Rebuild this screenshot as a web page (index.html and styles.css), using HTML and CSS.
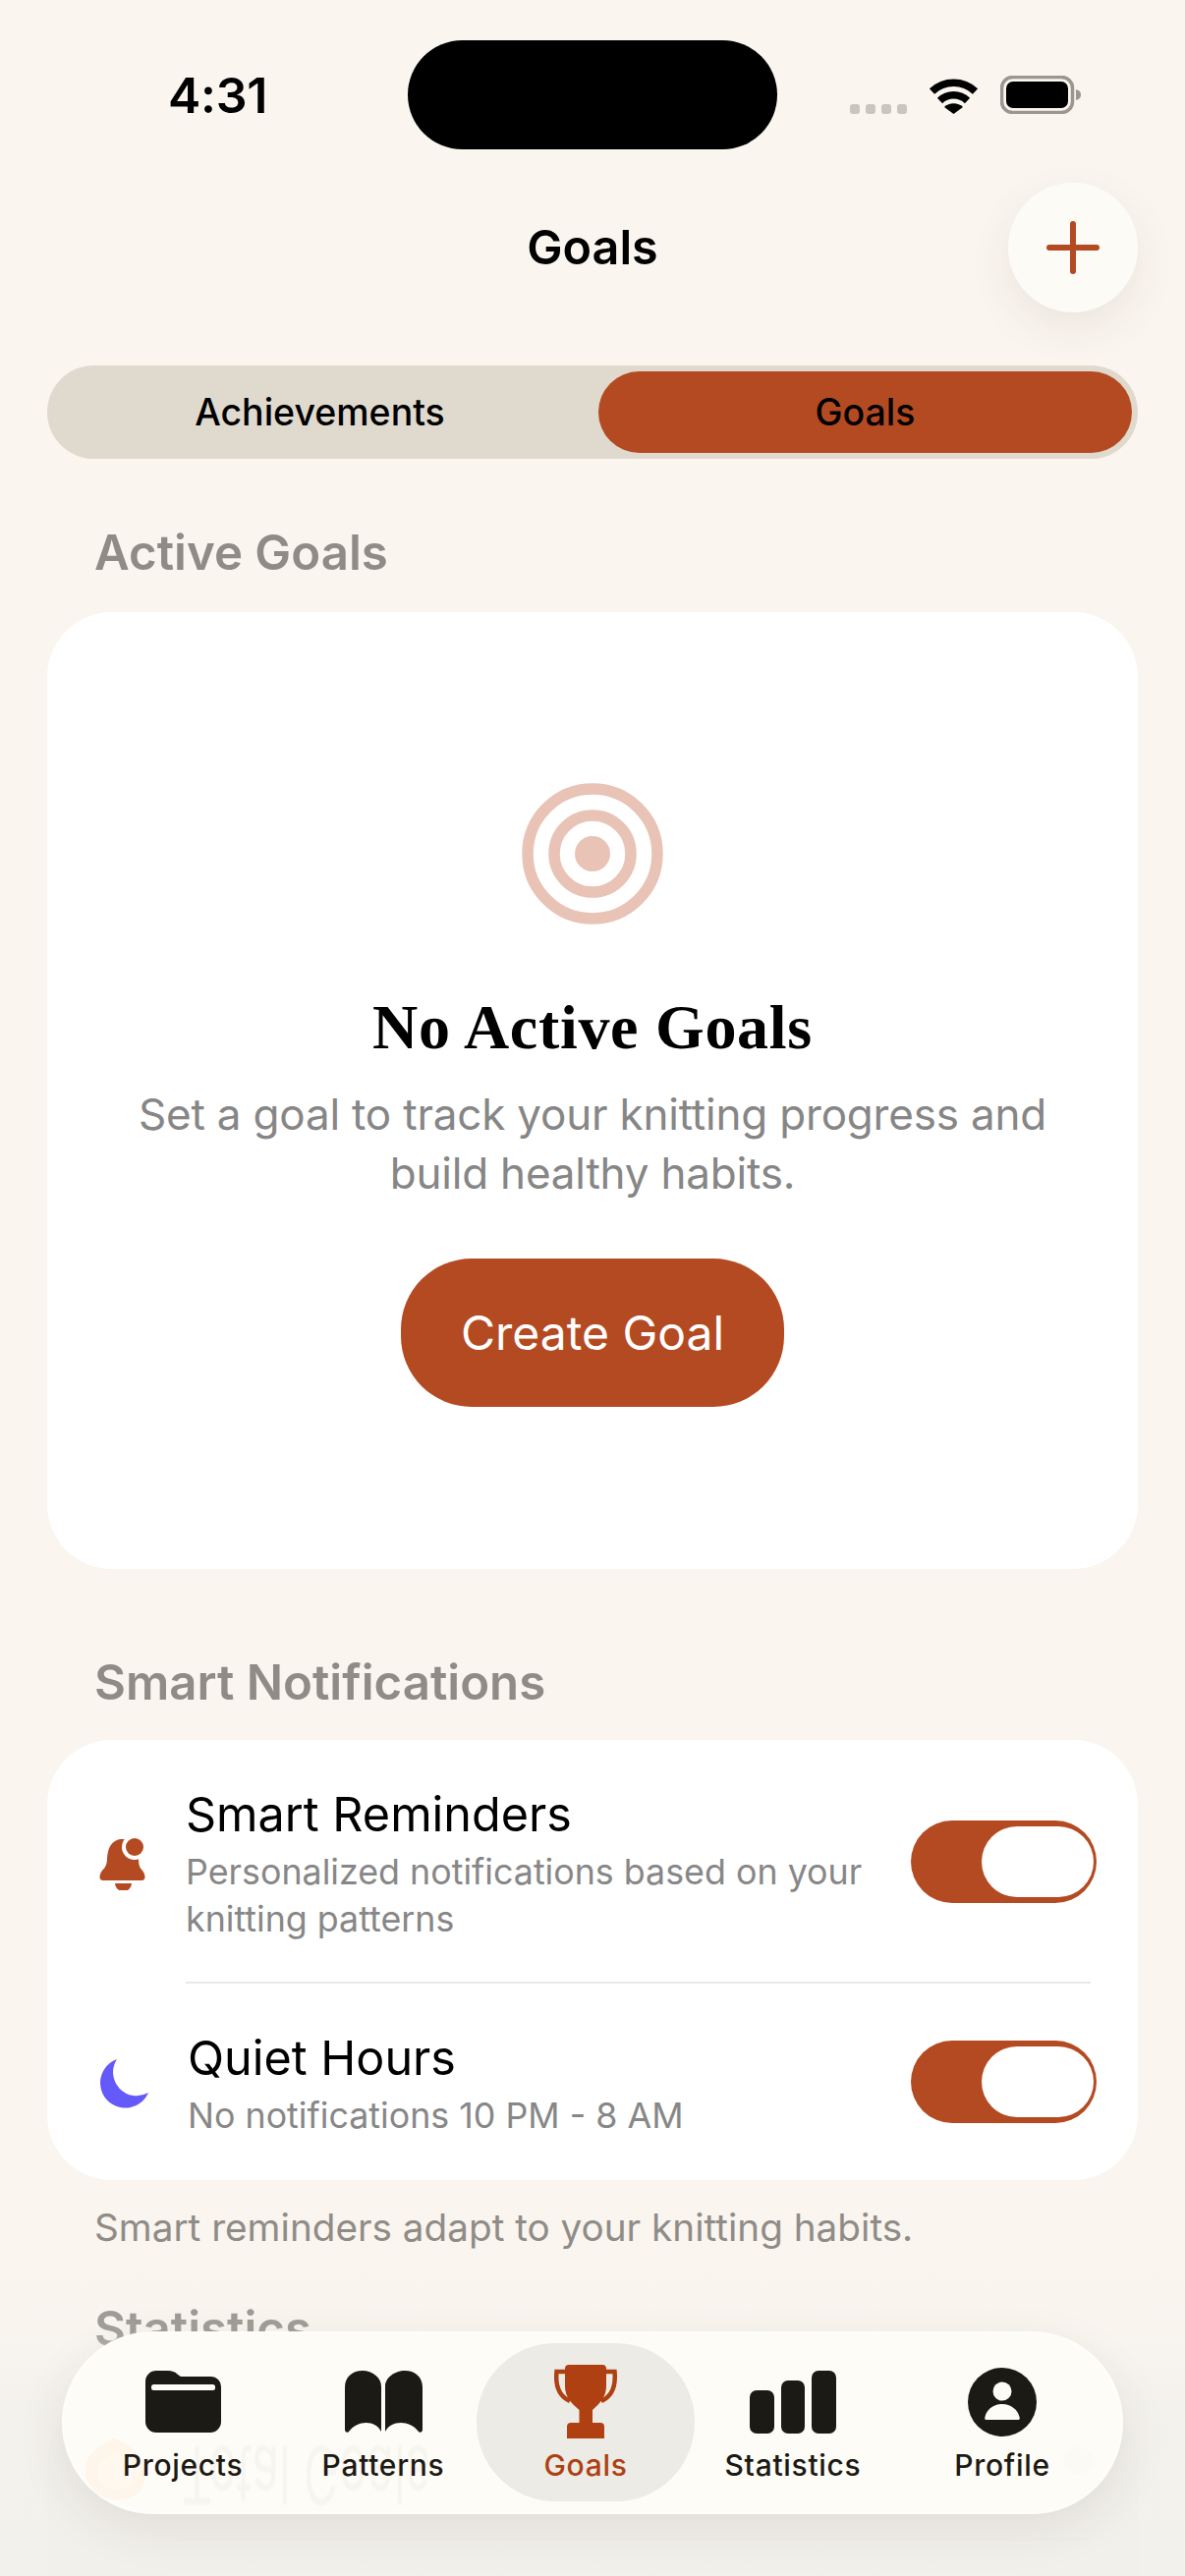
FILE: index.html
```html
<!DOCTYPE html>
<html lang="en">
<head>
<meta charset="utf-8">
<title>Goals</title>
<link rel="stylesheet" href="styles.css">
</head>
<body>
<div class="screen">
  <div class="statusbar">
    <div class="time">4:31</div>
    <div class="island"></div>
    <div class="status-icons">
      <div class="dots"><i></i><i></i><i></i><i></i></div>
      <svg class="wifi" width="51" height="37" viewBox="0 0 51 37"><path d="M3.500 14A32 32 0 0 1 47.500 14" fill="none" stroke="#000" stroke-width="7.500"/><path d="M11.500 23.500A20 20 0 0 1 39.500 23.500" fill="none" stroke="#000" stroke-width="7.500"/><path d="M25.500 37L16 30A14 14 0 0 1 35 30Z" fill="#000"/></svg>
      <svg class="battery" width="82" height="39" viewBox="0 0 82 39"><rect x="1.500" y="1.500" width="72" height="36" rx="11" fill="none" stroke="#9b978f" stroke-width="3.500"/><rect x="6" y="6" width="63" height="27" rx="7" fill="#000"/><path d="M77 14C81 15 82 17 82 19.500C82 22 81 24 77 25Z" fill="#9b978f"/></svg>
    </div>
  </div>

  <header class="header">
    <h1 class="title">Goals</h1>
    <button class="add-btn" aria-label="Add"><svg width="54" height="54" viewBox="0 0 54 54"><path d="M27 3V51M3 27H51" stroke="#b44a22" stroke-width="6" stroke-linecap="round"/></svg></button>
  </header>

  <div class="segment">
    <div class="seg-item">Achievements</div>
    <div class="seg-item seg-active">Goals</div>
  </div>

  <h2 class="section-head head-active">Active Goals</h2>
  <section class="card empty-card">
    <svg class="target" width="144" height="144" viewBox="0 0 144 144"><circle cx="72" cy="72" r="66" fill="none" stroke="#e8c3b6" stroke-width="11.500"/><circle cx="72" cy="72" r="39" fill="none" stroke="#e8c3b6" stroke-width="11.500"/><circle cx="72" cy="72" r="18" fill="#e8c3b6"/></svg>
    <h3 class="empty-title">No Active Goals</h3>
    <p class="empty-text">Set a goal to track your knitting progress and<br>build healthy habits.</p>
    <button class="create-btn">Create Goal</button>
  </section>

  <h2 class="section-head head-notif">Smart Notifications</h2>
  <section class="card notif-card">
    <div class="row row-first">
      <svg class="row-icon" width="50" height="53" viewBox="0 0 50 53"><path d="M21 1C12 3 9 10 8 20C8 27 6 30 3 33C0 37-1 43 4 43H43C48 43 47 37 44 33C41 30 40 27 40 20C40 10 33 2 26 1Z" fill="#b44a22"/><circle cx="36" cy="9" r="13" fill="#fff"/><circle cx="36" cy="9" r="9" fill="#b44a22"/><path d="M16 46H33A8.500 8 0 0 1 16 46Z" fill="#b44a22"/></svg>
      <div class="row-text">
        <div class="row-title">Smart Reminders</div>
        <div class="row-sub">Personalized notifications based on your<br>knitting patterns</div>
      </div>
      <div class="toggle"><div class="thumb"></div></div>
    </div>
    <div class="divider"></div>
    <div class="row row-second">
      <svg class="row-icon" width="50" height="51" viewBox="0 0 50 51"><path d="M18 0A25.500 25.500 0 1 0 50 34A24 24 0 0 1 18 0Z" fill="#6459f9"/></svg>
      <div class="row-text row-text-shift">
        <div class="row-title">Quiet Hours</div>
        <div class="row-sub">No notifications 10 PM - 8 AM</div>
      </div>
      <div class="toggle"><div class="thumb"></div></div>
    </div>
  </section>
  <p class="footnote">Smart reminders adapt to your knitting habits.</p>

  <h2 class="section-head head-stats">Statistics</h2>
  <section class="card stats-card">
    <div class="stats-divider"></div>
  </section>

  <div class="fade"></div>

  <nav class="tabbar">
    <div class="ghost">
      <svg class="ghost-flame" width="64" height="64" viewBox="0 0 64 64"><path d="M30 0C48 6 64 18 62 42C61 56 48 64 30 62C12 60 0 44 2 28C3 16 16 8 30 0Z" fill="#ff8a3c"/><path d="M32 14C44 20 52 28 50 42C49 50 40 54 30 52C20 50 12 40 14 30C15 24 24 20 32 14Z" fill="#ffb27a"/></svg>
      <div class="ghost-label">Total Goals</div>
      <div class="ghost-dot"></div>
    </div>
    <div class="tab tab-projects">
      <svg width="77" height="63" viewBox="0 0 77 63"><path d="M0 11A11 11 0 0 1 11 0H23C27 0 30 1 33 4L36 6H67A10 10 0 0 1 77 16V52A11 11 0 0 1 66 63H11A11 11 0 0 1 0 52Z" fill="#1c1a14"/><rect x="6" y="14" width="65" height="6" rx="2.500" fill="#fefcf7"/></svg>
      <span>Projects</span>
    </div>
    <div class="tab tab-patterns">
      <svg width="79" height="63" viewBox="0 0 79 63"><path d="M0 17C0 6 8 0 18 0C28 0 37 7 37 16V62C31 50 13 50 4 62C2 64 0 62 0 60Z" fill="#1c1a14"/><path d="M79 17C79 6 71 0 61 0C51 0 41 7 41 16V62C47 50 66 50 75 62C77 64 79 62 79 60Z" fill="#1c1a14"/></svg>
      <span>Patterns</span>
    </div>
    <div class="tab tab-goals">
      <svg width="66" height="75" viewBox="0 0 66 75"><path d="M13 7H3.500C2 22 6 32 17 37M53 7H62.500C64 22 60 32 49 37" fill="none" stroke="#ae4012" stroke-width="4.500"/><path d="M16 0H50A4 4 0 0 1 54 4V22C54 32 48 39 40 46V59H48A4 4 0 0 1 52 63V75H14V63A4 4 0 0 1 18 59H26.500V46C18 39 12 32 12 22V4A4 4 0 0 1 16 0Z" fill="#ae4012"/></svg>
      <span>Goals</span>
    </div>
    <div class="tab tab-stats">
      <div class="bars"><i class="bar bar-1"></i><i class="bar bar-2"></i><i class="bar bar-3"></i></div>
      <span>Statistics</span>
    </div>
    <div class="tab tab-profile">
      <svg width="70" height="70" viewBox="0 0 70 70"><circle cx="35" cy="35" r="35" fill="#1c1a14"/><circle cx="35" cy="24" r="9.500" fill="#fefcf7"/><path d="M19 53C17 53 17 51 17.500 50C19 43 26 37 35 37C44 37 51 43 52.500 50C53 51 53 53 51 53Z" fill="#fefcf7"/></svg>
      <span>Profile</span>
    </div>
  </nav>
</div>
</body>
</html>
```

FILE: styles.css
```css
* { box-sizing: border-box; }
html, body { margin: 0; padding: 0; }
body { width: 1206px; height: 2622px; overflow: hidden; background: #faf5ef; font-family: Inter, "Noto Sans", sans-serif; color: #000; }
.screen { position: relative; width: 1206px; height: 2622px; overflow: hidden; background: #faf5ef; padding-top: 41px; }

.statusbar { display: flex; align-items: center; height: 111px; padding-left: 171px; }
.time { width: 244px; font-size: 50px; font-weight: 600; line-height: 60px; letter-spacing: -0.3px; }
.island { width: 376px; height: 111px; border-radius: 56px; background: #000; }
.status-icons { position: relative; display: flex; align-items: flex-end; margin-left: 74px; height: 39px; margin-top: -1px; }
.dots { display: flex; gap: 6px; margin-right: 22px; }
.dots i { width: 10px; height: 10px; border-radius: 3px; background: #c9c6bf; }
.wifi { margin-right: 22px; }
.battery { display: block; }

.header { position: relative; display: flex; justify-content: center; align-items: center; height: 132px; margin-top: 34px; }
.title { margin: 0; font-size: 48.500px; font-weight: 600; line-height: 60px; }
.add-btn { position: absolute; right: 48px; top: 0; width: 132px; height: 132px; border: 0; padding: 0; border-radius: 50%; background: #fdfbf6; box-shadow: 0 16px 44px rgba(60, 50, 30, 0.08); display: flex; align-items: center; justify-content: center; }

.segment { display: flex; gap: 12px; margin: 54px 48px 0; height: 95px; padding: 6px; border-radius: 48px; background: #e0d9ce; }
.seg-item { flex: 1; display: flex; align-items: center; justify-content: center; border-radius: 42px; font-size: 37.500px; font-weight: 480; }
.seg-active { background: #b44a22; }

.section-head { margin: 0 0 0 96px; font-size: 49.200px; font-weight: 560; line-height: 60px; color: #8f8b86; }
.head-active { margin-top: 65px; margin-bottom: 31px; }
.head-notif { margin-top: 85px; margin-bottom: 29px; }
.head-stats { margin-top: 48px; }

.card { margin: 0 48px; background: #fff; border-radius: 66px; }
.empty-card { display: flex; flex-direction: column; align-items: center; height: 974px; padding-top: 174px; }
.target { display: block; }
.empty-title { margin: 67px 0 0; font-family: "Liberation Serif", serif; font-size: 64px; font-weight: 700; line-height: 76px; letter-spacing: 0.7px; }
.empty-text { margin: 20px 0 0; text-align: center; font-size: 44px; line-height: 60px; letter-spacing: -0.2px; color: #868686; }
.create-btn { margin-top: 57px; width: 390px; height: 151px; border: 0; border-radius: 72px; background: #b44a22; color: #fff; font-family: inherit; font-size: 48px; }

.notif-card { height: 448px; }
.row { display: flex; align-items: center; padding-left: 53px; padding-right: 42px; }
.row-first { padding-top: 46px; padding-bottom: 40px; }
.row-second { padding-top: 46px; padding-bottom: 43px; }
.row-icon { flex: none; margin-right: 38px; }
.row-text { flex: 1; }
.row-text-shift { margin-left: 2px; }
.row-title { font-size: 48.500px; line-height: 60px; }
.row-sub { margin-top: 4px; font-size: 35.800px; line-height: 48px; color: #878787; }
.toggle { flex: none; display: flex; justify-content: flex-end; align-items: center; width: 189px; height: 84px; margin-bottom: 4px; padding: 6px 3px; border-radius: 42px; background: #b44a22; }
.thumb { width: 114px; height: 72px; border-radius: 36px; background: #fff; }
.divider { height: 2px; margin: 0 48px 0 141px; background: #e8e8e8; }

.footnote { margin: 23px 0 0 96px; font-size: 38.700px; line-height: 50px; color: #8f8c88; }

.stats-card { margin-top: 40px; height: 300px; padding-top: 143px; background: #e9e8e3; }
.stats-divider { height: 3px; margin: 0 48px 0 132px; background: #cfcdc8; }

.fade { position: absolute; left: 0; right: 0; bottom: 0; height: 332px; background: linear-gradient(to bottom, rgba(243, 241, 236, 0), rgba(243, 241, 236, 0.2) 25%, rgba(243, 241, 236, 0.9) 48%, rgba(243, 241, 236, 0.93)); }

.tabbar { position: absolute; left: 63px; top: 2373px; width: 1080px; height: 186px; border-radius: 93px; overflow: hidden; background: #fefcf7; box-shadow: 0 16px 50px rgba(50, 45, 30, 0.09), inset 0 0 14px rgba(255, 255, 255, 0.7); }
.ghost { position: absolute; inset: 0; }
.ghost-flame { position: absolute; left: 22px; top: 109px; opacity: 0.06; }
.ghost-label { position: absolute; left: 122px; top: 126px; font-size: 48px; line-height: 40px; white-space: nowrap; transform: scale(1, -1.7); filter: blur(0.6px); color: rgba(40, 30, 20, 0.03); }
.ghost-dot { position: absolute; left: 1020px; top: 117px; width: 29px; height: 29px; border-radius: 50%; background: rgba(60, 50, 30, 0.012); }
.tab { position: absolute; top: 0; bottom: 0; display: flex; flex-direction: column; align-items: center; font-size: 30px; font-weight: 500; line-height: 40px; letter-spacing: 0.7px; color: #1c1a14; }
.tab span { position: absolute; top: 116px; white-space: nowrap; }
.tab svg { display: block; }
.tab-projects { left: 63px; width: 120px; padding-top: 40px; }
.tab-patterns { left: 267px; width: 120px; padding-top: 40px; }
.tab-goals { left: 422px; width: 222px; top: 12px; bottom: 13px; padding-top: 22px; border-radius: 80px; background: #ecebe5; color: #ae4012; }
.tab-goals span { top: 104px; }
.tab-stats { left: 674px; width: 140px; padding-top: 40px; }
.bars { display: flex; align-items: flex-end; gap: 7px; height: 64px; }
.bar { display: block; width: 24.500px; border-radius: 7px; background: #1c1a14; }
.bar-1 { height: 44px; }
.bar-2 { height: 54px; }
.bar-3 { height: 64px; }
.tab-profile { left: 907px; width: 100px; padding-top: 37px; }
```
